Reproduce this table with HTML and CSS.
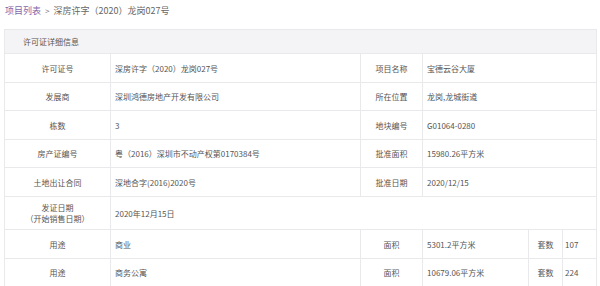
FILE: index.html
```html
<!DOCTYPE html>
<html lang="zh">
<head>
<meta charset="utf-8">
<link rel="stylesheet" href="styles.css">
</head>
<body>
<div class="page">
  <div class="crumb"><span class="crumb-link">项目列表</span><span class="crumb-sep">&gt;</span><span class="crumb-cur">深房许字（2020）龙岗027号</span></div>
  <table class="info">
    <colgroup>
      <col class="c1"><col class="c2"><col class="c3"><col class="c4"><col class="c5"><col class="c6">
    </colgroup>
    <tr class="head"><th colspan="6">许可证详细信息</th></tr>
    <tr class="r29"><td class="lbl">许可证号</td><td class="val">深房许字（2020）龙岗027号</td><td class="lbl">项目名称</td><td class="val" colspan="3">宝德云谷大厦</td></tr>
    <tr class="r28"><td class="lbl">发展商</td><td class="val">深圳鸿德房地产开发有限公司</td><td class="lbl">所在位置</td><td class="val" colspan="3">龙岗,龙城街道</td></tr>
    <tr class="r29"><td class="lbl">栋数</td><td class="val">3</td><td class="lbl">地块编号</td><td class="val" colspan="3">G01064-0280</td></tr>
    <tr class="r28"><td class="lbl">房产证编号</td><td class="val">粤（2016）深圳市不动产权第0170384号</td><td class="lbl">批准面积</td><td class="val" colspan="3">15980.26平方米</td></tr>
    <tr class="r29"><td class="lbl">土地出让合同</td><td class="val">深地合字(2016)2020号</td><td class="lbl">批准日期</td><td class="val" colspan="3">2020/12/15</td></tr>
    <tr class="r33"><td class="lbl">发证日期<br>（开始销售日期）</td><td class="val" colspan="5">2020年12月15日</td></tr>
    <tr class="r29"><td class="lbl">用途</td><td class="val">商业</td><td class="lbl">面积</td><td class="val">5301.2平方米</td><td class="lbl">套数</td><td class="val num">107</td></tr>
    <tr class="r28"><td class="lbl">用途</td><td class="val">商务公寓</td><td class="lbl">面积</td><td class="val">10679.06平方米</td><td class="lbl">套数</td><td class="val num">224</td></tr>
  </table>
</div>
</body>
</html>
```
FILE: styles.css
```css
html, body {
  margin: 0;
  padding: 0;
  background: #ffffff;
}
body {
  font-family: "Noto Sans CJK SC", "Noto Sans", sans-serif;
  color: #555555;
}
.page {
  padding: 0 4px;
}
.crumb {
  height: 29px;
  display: flex;
  align-items: flex-start;
  padding-top: 4px;
  box-sizing: border-box;
  font-size: 9px;
  line-height: 14px;
  padding-left: 1px;
}
.crumb-link {
  color: #8166ac;
}
.crumb-sep {
  color: #777;
  margin: 0 4px;
  font-size: 8px;
}
.crumb-cur {
  color: #666;
}
.info {
  width: 592px;
  border-collapse: collapse;
  table-layout: fixed;
  font-size: 8px;
  line-height: 11px;
}
.c1 { width: 106px; }
.c2 { width: 250px; }
.c3 { width: 62px; }
.c4 { width: 106px; }
.c5 { width: 34px; }
.c6 { width: 34px; }
.info th, .info td {
  border: 1px solid #e9e8ea;
  padding: 0;
  vertical-align: middle;
}
.head th {
  height: 23px;
  background: #f4f3f5;
  text-align: left;
  font-weight: normal;
  padding-left: 18px;
  color: #555;
}
.r28 td { height: 27px; }
.r29 td { height: 28px; }
.r33 td { height: 32px; }
.lbl {
  text-align: center;
  color: #555;
}
.val {
  text-align: left;
  padding-left: 4px !important;
  color: #555;
}
.num {
  padding-left: 2px !important;
}
```
